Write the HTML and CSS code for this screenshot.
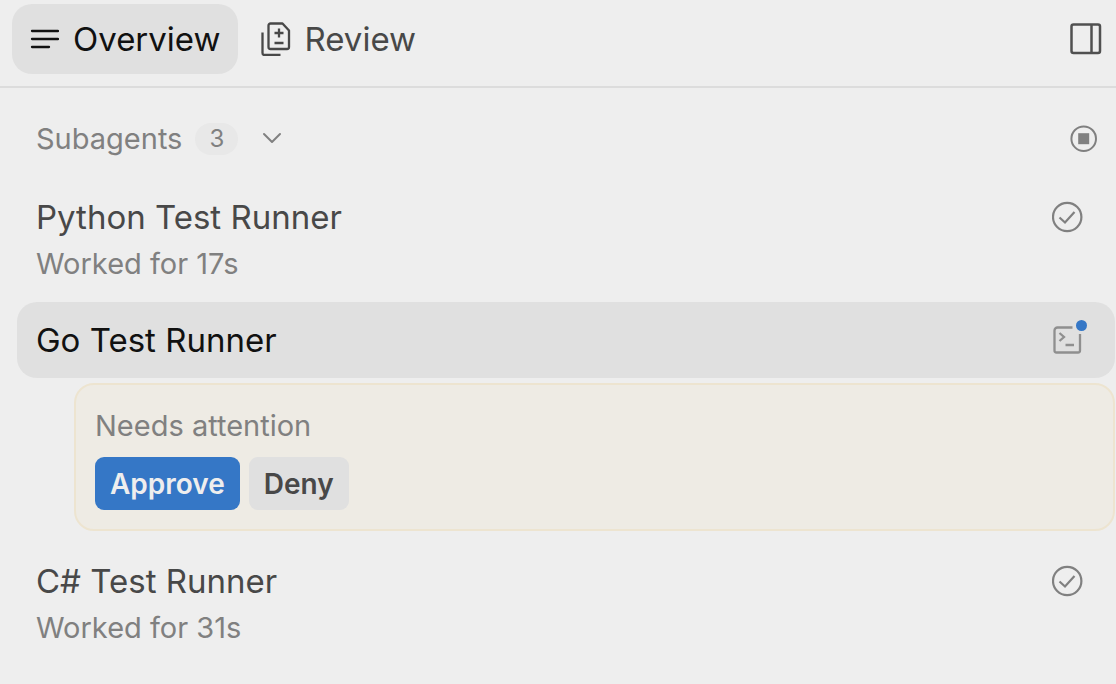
FILE: index.html
```html
<!DOCTYPE html>
<html lang="en">

<head>
    <meta charset="UTF-8">
    <meta name="viewport" content="width=device-width, initial-scale=1.0">
    <title>Subagents</title>
    <link rel="stylesheet" href="styles.css">
</head>

<body>
    <header class="topbar">
        <nav class="tabs">
            <button type="button" class="tab active">
                <svg width="30" height="32" viewBox="0 0 30 32" fill="none" stroke="currentColor" stroke-width="2.300" stroke-linecap="round">
                    <path d="M3 8h26M3 16h26M3 24h17" />
                </svg>
                Overview
            </button>
            <button type="button" class="tab">
                <svg width="30" height="34" viewBox="0 0 30 34" fill="none" stroke="currentColor" stroke-width="2.300" stroke-linejoin="round">
                    <path d="M9.500 1.500h12l6.500 7v16.500a2 2 0 0 1-2 2h-16.500a2 2 0 0 1-2-2v-21.500a2 2 0 0 1 2-2z" />
                    <path d="M1.500 10.500v20.500a2 2 0 0 0 2 2h16M18 6.500v9M13.500 11h9M13.500 21h9" />
                </svg>
                Review
            </button>
        </nav>
        <button type="button" class="icon-button panel-toggle" aria-label="Toggle side panel">
            <svg width="32" height="32" viewBox="0 0 32 32" fill="none" stroke="currentColor" stroke-width="2.500">
                <rect x="1.500" y="1.500" width="28.500" height="28.500" rx="2" />
                <path d="M21.500 2v28" />
            </svg>
        </button>
    </header>
    <main>
        <div class="section-header">
            <h2>Subagents</h2>
            <span class="count">3</span>
            <button type="button" class="icon-button" aria-label="Collapse subagents">
                <svg width="20" height="14" viewBox="0 0 20 14" fill="none" stroke="currentColor" stroke-width="2" stroke-linecap="round" stroke-linejoin="round">
                    <path d="M2 2l8 8 8-8" />
                </svg>
            </button>
            <button type="button" class="icon-button stop" aria-label="Stop all">
                <svg width="28" height="28" viewBox="0 0 28 28">
                    <circle cx="13.700" cy="13.700" r="12.300" fill="none" stroke="currentColor" stroke-width="2" />
                    <rect x="8.200" y="8.200" width="11" height="11" fill="currentColor" />
                </svg>
            </button>
        </div>
        <ul class="agents">
            <li>
                <div class="agent">
                    <h3>Python Test Runner</h3>
                    <svg width="32" height="32" viewBox="0 0 32 32" fill="none" stroke="currentColor" stroke-width="2.200">
                        <circle cx="15.200" cy="16" r="14.200" />
                        <path d="M7.500 16.500l5.500 5 9.500-10.500" />
                    </svg>
                </div>
                <p class="status">Worked for 17s</p>
            </li>
            <li>
                <div class="agent selected">
                    <h3>Go Test Runner</h3>
                    <svg width="32" height="32" viewBox="0 0 32 32" fill="none" overflow="visible">
                        <path d="M20.500 3.500h-15a3 3 0 0 0-3 3v20a2 2 0 0 0 2 2h21.500a2 2 0 0 0 2-2v-16.500" stroke="#8f8f8f" stroke-width="2.300" />
                        <path d="M7.500 9l4.500 4-4.500 4M13.500 21h8.500" stroke="#8f8f8f" stroke-width="2.300" />
                        <circle cx="29.500" cy="1.500" r="5.500" fill="#3577c6" />
                    </svg>
                </div>
                <div class="attention">
                    <p>Needs attention</p>
                    <div class="actions">
                        <button type="button" class="approve">Approve</button>
                        <button type="button" class="deny">Deny</button>
                    </div>
                </div>
            </li>
            <li>
                <div class="agent">
                    <h3>C# Test Runner</h3>
                    <svg width="32" height="32" viewBox="0 0 32 32" fill="none" stroke="currentColor" stroke-width="2.200">
                        <circle cx="15.200" cy="16" r="14.200" />
                        <path d="M7.500 16.500l5.500 5 9.500-10.500" />
                    </svg>
                </div>
                <p class="status">Worked for 31s</p>
            </li>
        </ul>
    </main>
</body>

</html>
```
FILE: styles.css
```css
* {
    box-sizing: border-box;
}

body {
    font-family: Inter, "Liberation Sans", sans-serif;
    margin: 0;
    background-color: #eeeeee;
    color: #808080;
}

h2,
h3,
p,
ul {
    margin: 0;
    padding: 0;
    font-weight: 400;
}

ul {
    list-style: none;
}

svg {
    display: block;
    flex-shrink: 0;
}

button {
    font-family: inherit;
    border: none;
    cursor: pointer;
}

.topbar {
    display: flex;
    align-items: center;
    justify-content: space-between;
    padding: 4px 14px 12px 12px;
    border-bottom: 2px solid #dcdcdc;
}

.tabs {
    display: flex;
    gap: 6px;
}

.tab {
    display: flex;
    align-items: center;
    gap: 14px;
    height: 70px;
    padding: 0 17px;
    border-radius: 20px;
    background-color: transparent;
    color: #484848;
    font-size: 33px;
}

.tab.active {
    background-color: #e0e0e0;
    color: #111111;
}

.icon-button {
    padding: 0;
    background-color: transparent;
    color: #808080;
}

.panel-toggle {
    color: #505050;
}

.section-header {
    display: flex;
    align-items: center;
    padding: 31px 18px 20px 36px;
}

.section-header h2 {
    font-size: 29px;
    line-height: 40px;
}

.count {
    margin: 0 24px 0 13px;
    padding: 0 14px;
    border-radius: 16px;
    background-color: #e8e8e8;
    font-size: 24px;
    line-height: 32px;
}

.stop {
    margin-left: auto;
}

.agents {
    display: flex;
    flex-direction: column;
    gap: 12px;
    padding: 0 1px 0 17px;
}

.agent {
    display: flex;
    align-items: center;
    justify-content: space-between;
    height: 76px;
    padding: 0 31px 0 19px;
    border-radius: 20px;
}

.agent h3 {
    color: #484848;
    font-size: 33px;
}

.agent.selected {
    background-color: #e0e0e0;
}

.agent.selected h3 {
    color: #111111;
}

.status {
    margin-top: -11px;
    padding: 0 19px 6px;
    font-size: 29px;
    line-height: 40px;
}

.attention {
    margin: 5px 0 0 57px;
    padding: 21px 19px 19px;
    border: 2px solid #ede4d0;
    border-radius: 20px;
    background-color: #eeebe4;
    font-size: 29px;
    line-height: 40px;
}

.actions {
    display: flex;
    gap: 9px;
    margin-top: 11px;
}

.actions button {
    height: 53px;
    padding: 0 15px;
    border-radius: 9px;
    font-size: 28px;
    font-weight: 600;
}

.approve {
    background-color: #3577c6;
    color: #eeeeee;
}

.deny {
    background-color: #e0e0e0;
    color: #484848;
}
```
